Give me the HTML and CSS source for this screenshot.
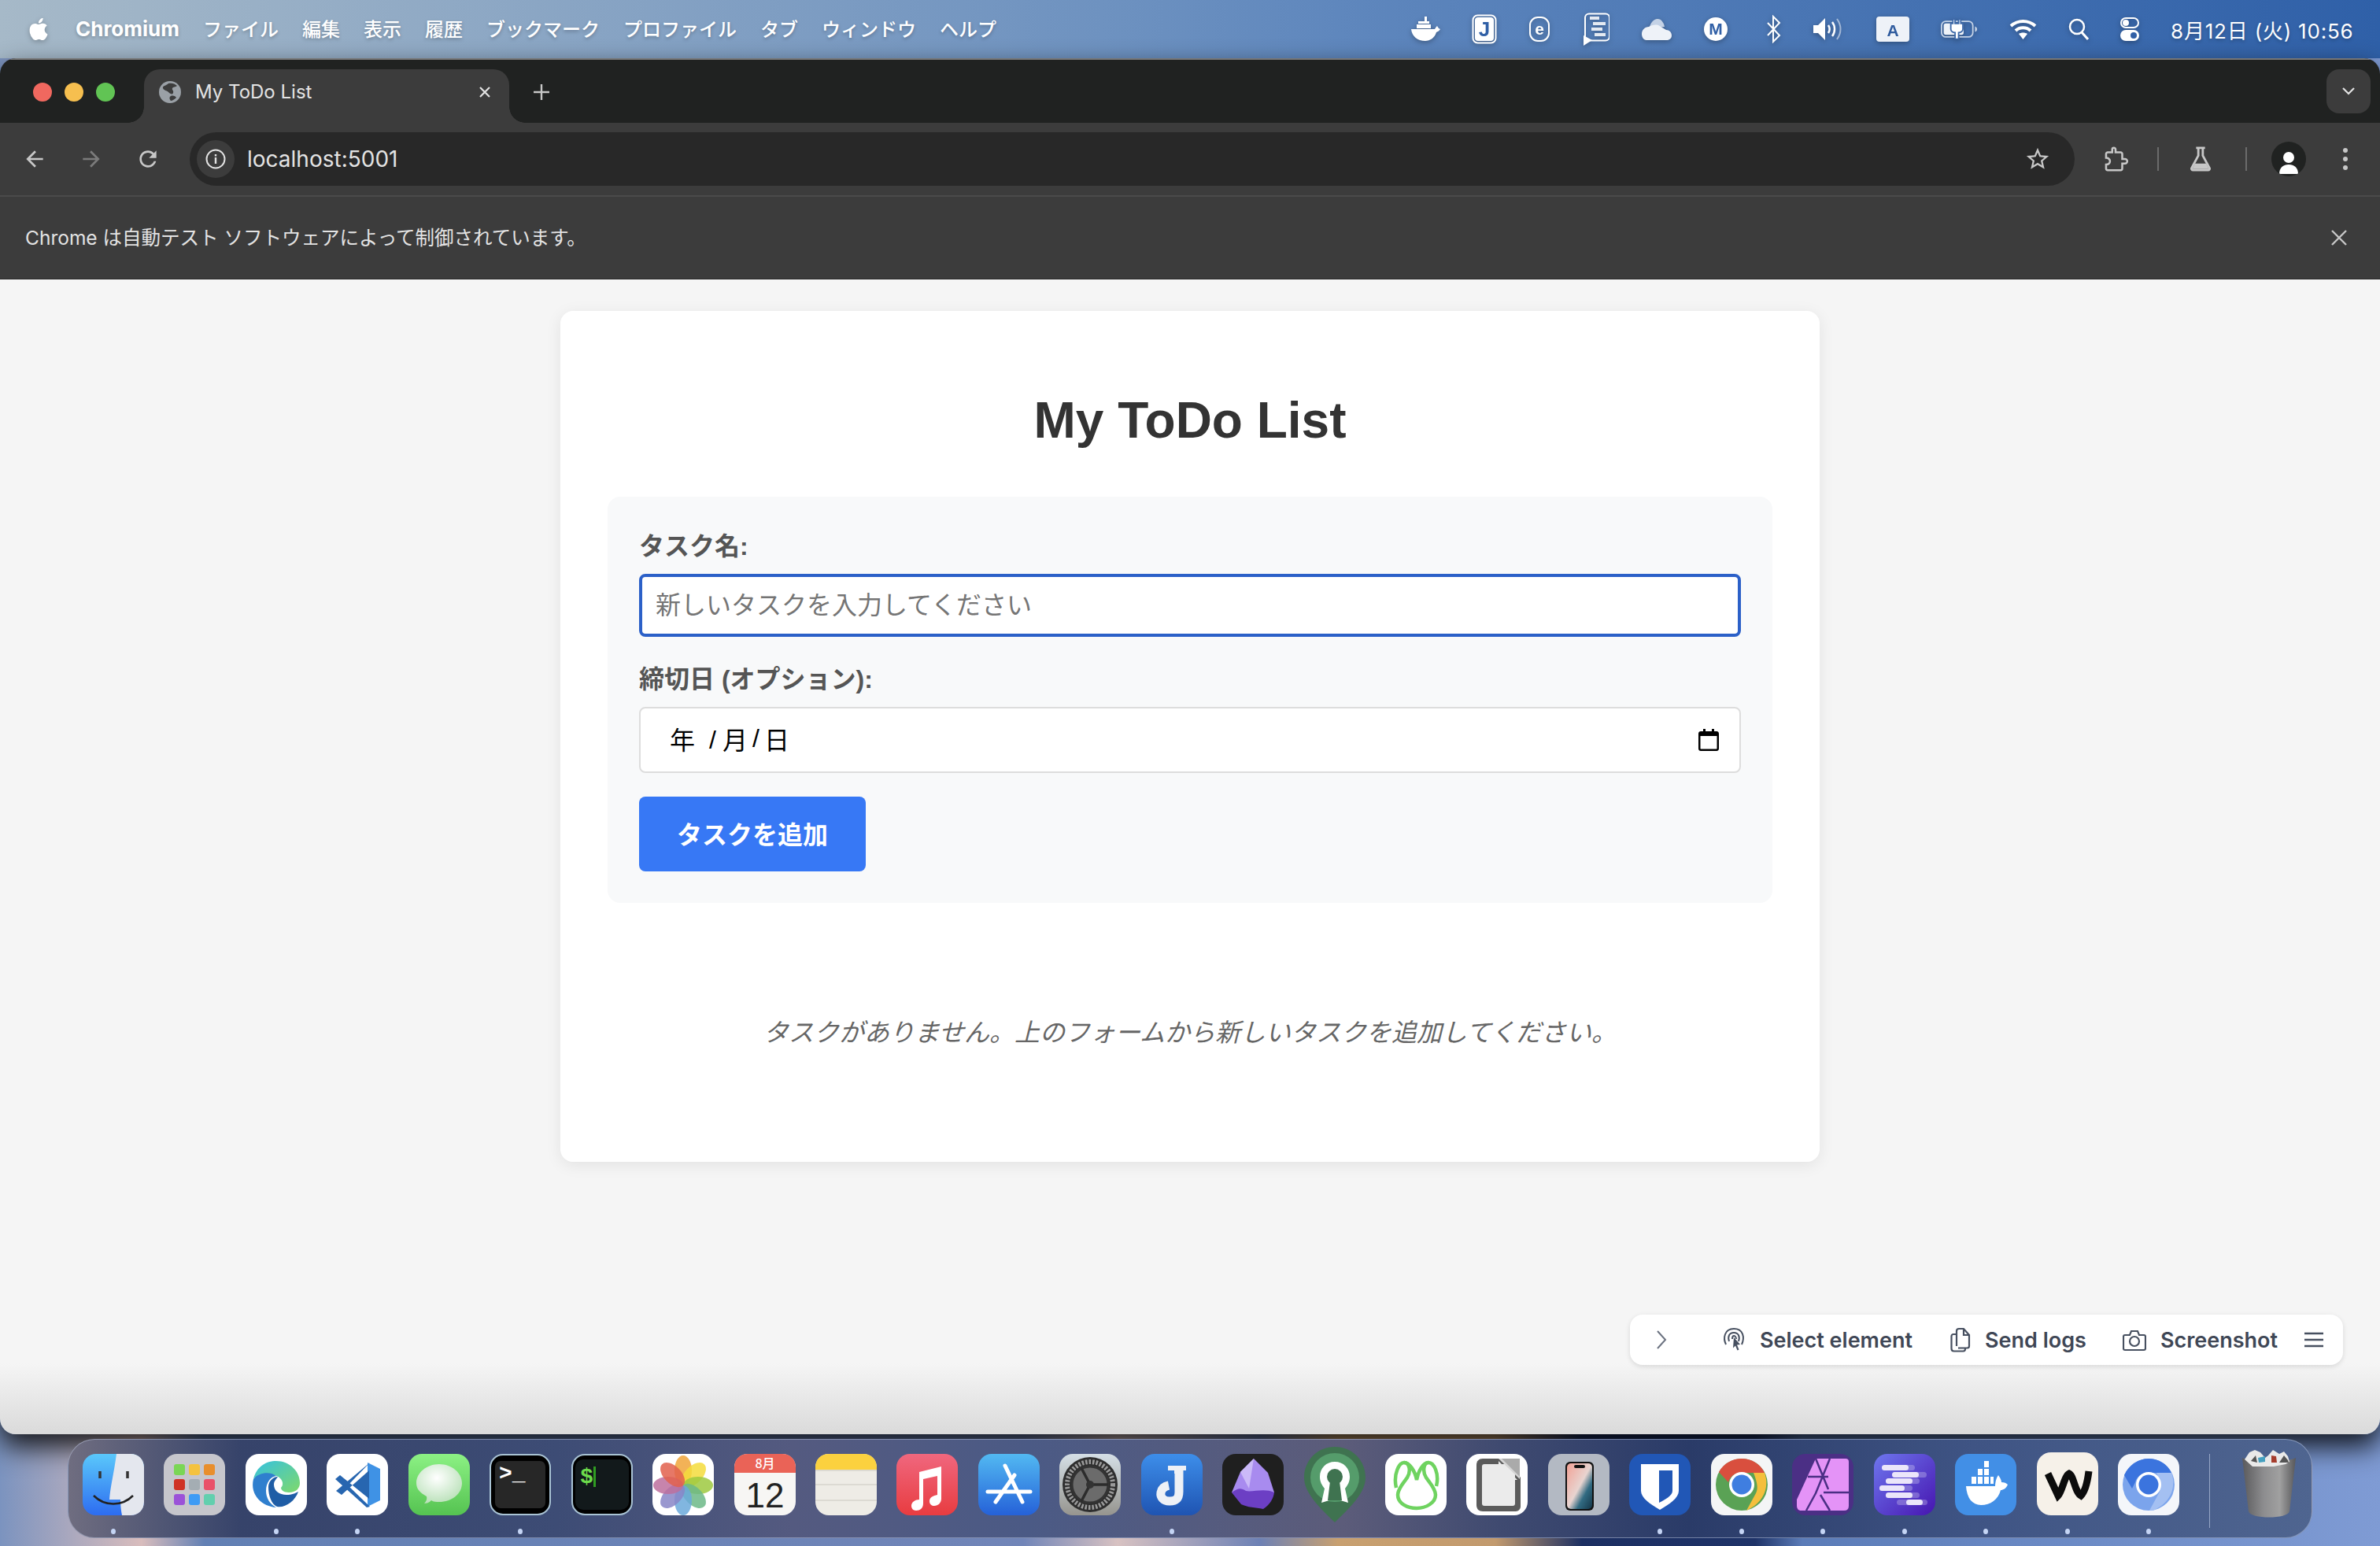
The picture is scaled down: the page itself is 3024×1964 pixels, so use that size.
FILE: index.html
```html
<!DOCTYPE html>
<html lang="ja">

<head>
    <meta charset="UTF-8">
    <title>My ToDo List</title>
    <link rel="stylesheet" href="styles.css">
</head>

<body>

    <!-- mac menu bar -->
    <header class="menubar">
        <svg class="apple" width="28" height="33" viewBox="0 0 16 16.5"><path fill="#fff" d="M11.182.008C11.148-.03 9.923.023 8.857 1.18c-1.066 1.156-.902 2.482-.878 2.516s1.52.087 2.475-1.258.762-2.391.728-2.43m3.314 11.733c-.048-.096-2.325-1.234-2.113-3.422s1.675-2.789 1.698-2.854-.597-.79-1.254-1.157a3.7 3.7 0 0 0-1.563-.434c-.108-.003-.483-.095-1.254.116-.508.139-1.653.589-1.968.607-.316.018-1.256-.522-2.267-.665-.647-.1-1.333.105-1.824.302-.49.197-1.422.759-2.074 2.242-.652 1.483-.311 3.832-.067 4.562.244.73.625 1.926 1.273 2.799.576.986 1.34 1.67 1.659 1.903s1.219.388 1.843.07c.502-.282 1.408-.444 1.766-.431.357.013 1.061.154 1.782.539.571.197 1.111.115 1.652-.105.541-.221 1.324-1.059 2.238-2.758q.52-1.185.473-1.282"/></svg>
        <nav class="menu-items">
            <span class="app-name">Chromium</span>
            <span>ファイル</span>
            <span>編集</span>
            <span>表示</span>
            <span>履歴</span>
            <span>ブックマーク</span>
            <span>プロファイル</span>
            <span>タブ</span>
            <span>ウィンドウ</span>
            <span>ヘルプ</span>
        </nav>
        <div class="status-items">
            <!-- docker -->
            <svg width="38" height="34" viewBox="0 0 38 34"><path fill="#fff" d="M18 1h3v6h-3zM10 7h14v3H10zM8 11h18v5H8zM1 17h30c1-2 2-3 3-4l2 3 2 1c-1 2-3 3-5 4-2 7-8 11-14 11C9 32 2 26 1 17z"/></svg>
            <!-- joplin -->
            <svg width="32" height="38" viewBox="0 0 32 38"><rect x="1.5" y="1.5" width="29" height="35" rx="6" fill="none" stroke="#fff" stroke-width="2"/><rect x="4" y="4" width="24" height="30" rx="4" fill="#fff"/><text class="status-letter" x="16" y="28" text-anchor="middle" fill="#3160a6">J</text></svg>
            <!-- e -->
            <svg width="30" height="34" viewBox="0 0 30 34"><rect x="2" y="2" width="24" height="30" rx="10" fill="none" stroke="#fff" stroke-width="2"/><text class="status-letter small" x="14" y="24" text-anchor="middle" fill="#fff">e</text></svg>
            <!-- script list -->
            <svg width="33" height="42" viewBox="0 0 33 42"><rect x="2" y="1.5" width="31" height="34" rx="5" fill="none" stroke="#fff" stroke-width="2"/><path stroke="#fff" stroke-width="4" d="M8 7h12M12 14h16M10 21h14M14 28h14" opacity=".85"/><path fill="#fff" d="M0 29l11 6-11 7z"/></svg>
            <!-- cloud -->
            <svg width="40" height="28" viewBox="0 0 40 28"><path fill="#c4d2e6" d="M10 14C12 6 16 1 21 1s8 5 9 10z"/><path fill="#eef2f8" d="M1 20c0-5 4-9 9-9 3-2 8-3 12-2l10 6c4 0 7 3 7 7s-3 6-7 6H7c-4 0-6-4-6-8z"/></svg>
            <!-- m -->
            <svg width="38" height="34" viewBox="0 0 38 34"><circle cx="15" cy="17" r="15" fill="#fff"/><text class="status-letter small" x="15" y="24" text-anchor="middle" fill="#3160a6">M</text></svg>
            <!-- bluetooth -->
            <svg width="21" height="36" viewBox="0 0 21 36"><path fill="none" stroke="#fff" stroke-width="2" d="M3 10l15 16-8 8V2l8 8L3 26"/></svg>
            <!-- volume -->
            <svg width="40" height="32" viewBox="0 0 40 32"><path fill="#fff" d="M0 11h6l9-9v28l-9-9H0z"/><path fill="none" stroke="#fff" stroke-width="2.5" d="M19 11c2 3 2 7 0 10M24 7c4 5 4 13 0 18"/><path fill="none" stroke="#fff" stroke-width="2" opacity=".5" d="M30 3c6 8 6 18 0 26"/></svg>
            <!-- input source -->
            <svg width="42" height="32" viewBox="0 0 42 32"><rect x="0" y="0" width="42" height="32" rx="4" fill="#eef2f8"/><text class="status-letter small" x="21" y="25" text-anchor="middle" fill="#2f5b9e">A</text></svg>
            <!-- battery -->
            <svg width="47" height="26" viewBox="0 0 52 28"><rect x="1" y="3" width="44" height="22" rx="6" fill="none" stroke="#c4d2e6" stroke-width="2"/><rect x="4" y="6" width="28" height="16" rx="3" fill="#eef2f8"/><path fill="#fff" stroke="#3d69a9" stroke-width="2" d="M17 0h3v6h5V0h3v6h3v8c0 3-3 5-6 5v9h-5v-9c-3 0-6-2-6-5V6h3z"/><path fill="#c4d2e6" d="M48 10c2 1 3 2 3 4s-1 3-3 4z"/></svg>
            <!-- wifi -->
            <svg width="35" height="28" viewBox="0 0 35 28"><path fill="none" stroke="#fff" stroke-width="4" d="M2 10c9-8 22-8 31 0M8 16c5-5 14-5 19 0"/><path fill="#fff" d="M12 20c3-2 8-2 11 0l-5.500 7z"/></svg>
            <!-- search -->
            <svg width="26" height="28" viewBox="0 0 26 28"><circle cx="11" cy="11" r="9" fill="none" stroke="#fff" stroke-width="2.5"/><path stroke="#fff" stroke-width="3" d="M17 18l8 9"/></svg>
            <!-- control center -->
            <svg width="24" height="30" viewBox="0 0 24 30"><rect x="1" y="1" width="22" height="12" rx="6" fill="none" stroke="#fff" stroke-width="2"/><circle cx="7" cy="7" r="4" fill="#fff"/><rect y="16" width="24" height="14" rx="7" fill="#fff"/><circle cx="17" cy="23" r="4" fill="#3160a6"/></svg>
            <span class="clock">8月12日 (火) 10:56</span>
        </div>
    </header>

    <!-- browser window -->
    <main class="window">
        <div class="tabstrip">
            <div class="traffic">
                <i class="light red"></i>
                <i class="light yellow"></i>
                <i class="light green"></i>
            </div>
            <div class="tab">
                <svg width="28" height="28" viewBox="0 0 28 28"><circle cx="14" cy="14" r="14" fill="#9aa0a6"/><path fill="#3c3c3c" d="M12 3c4-1 8 0 11 3-2 2-5 1-6 3s2 3 1 6-4 1-6-1-6-2-7-5 4-3 7-6zM15 19c3-1 6 0 7 2-2 2-5 4-7 4-2-2-2-5 0-6z"/></svg>
                <span class="tab-title">My ToDo List</span>
                <svg class="tab-close" width="18" height="18" viewBox="0 0 18 18"><path stroke="#e3e3e3" stroke-width="2.200" d="M3 3l12 12M15 3L3 15"/></svg>
            </div>
            <svg class="tab-new" width="24" height="24" viewBox="0 0 24 24"><path stroke="#c7c7c7" stroke-width="2.400" d="M12 2v20M2 12h20"/></svg>
            <div class="tab-search">
                <svg width="18" height="12" viewBox="0 0 18 12"><path fill="none" stroke="#e3e3e3" stroke-width="2.200" d="M2 2l7 7 7-7"/></svg>
            </div>
        </div>

        <div class="toolbar">
            <svg class="tool-icon" width="44" height="32" viewBox="0 0 24 24"><path fill="#c7c7c7" d="M20 11H7.830l5.590-5.590L12 4l-8 8 8 8 1.410-1.410L7.830 13H20v-2z"/></svg>
            <svg class="tool-icon" width="44" height="32" viewBox="0 0 24 24"><path fill="#7b7b7b" d="M4 11h12.170l-5.590-5.590L12 4l8 8-8 8-1.410-1.410L16.170 13H4v-2z"/></svg>
            <svg class="tool-icon" width="44" height="32" viewBox="0 0 24 24"><path fill="#c7c7c7" d="M17.650 6.350C16.200 4.900 14.210 4 12 4c-4.420 0-7.990 3.580-7.990 8s3.570 8 7.990 8c3.730 0 6.840-2.550 7.730-6h-2.080c-.82 2.330-3.040 4-5.650 4-3.310 0-6-2.690-6-6s2.690-6 6-6c1.660 0 3.140.69 4.220 1.780L13 11h7V4l-2.350 2.350z"/></svg>
            <div class="omnibox">
                <div class="site-chip">
                    <svg width="26" height="26" viewBox="0 0 26 26"><circle cx="13" cy="13" r="11.500" fill="none" stroke="#e3e3e3" stroke-width="2"/><path stroke="#e3e3e3" stroke-width="2.400" d="M13 11v8M13 7v2.400"/></svg>
                </div>
                <span class="url">localhost:5001</span>
                <svg class="star" width="34" height="34" viewBox="0 0 24 24"><path fill="#c7c7c7" d="M22 9.240l-7.190-.62L12 2 9.190 8.630 2 9.240l5.460 4.730L5.820 21 12 17.270 18.180 21l-1.630-7.030L22 9.240zM12 15.400l-3.760 2.270 1-4.280-3.320-2.880 4.380-.38L12 6.100l1.710 4.040 4.380.38-3.320 2.880 1 4.280L12 15.400z"/></svg>
            </div>
            <svg class="tool-icon" width="44" height="34" viewBox="0 0 24 24"><path fill="none" stroke="#c7c7c7" stroke-width="1.800" d="M20.500 12H18V7.500c0-.8-.7-1.500-1.500-1.500H12V3.500C12 2.700 11.300 2 10.500 2S9 2.700 9 3.500V6H5c-.8 0-1.500.7-1.500 1.500V11c2 0 3.500 1.200 3.500 3s-1.500 3-3.500 3v3.500c0 .8.700 1.500 1.500 1.500h11.500c.8 0 1.500-.7 1.500-1.500V16h2.500c1.100 0 2-.9 2-2s-.9-2-2-2z"/></svg>
            <i class="tool-sep"></i>
            <svg class="tool-icon flask" width="44" height="34" viewBox="0 0 24 24"><path fill="none" stroke="#c7c7c7" stroke-width="2" d="M8 2h8M10 2v7L4 20c-.5 1 .2 2 1.200 2h13.600c1 0 1.700-1 1.200-2L14 9V2"/><path fill="#c7c7c7" d="M7 16h10l2.500 5h-15z"/></svg>
            <i class="tool-sep"></i>
            <div class="avatar">
                <svg width="26" height="32" viewBox="0 0 26 32"><circle cx="13" cy="8" r="7" fill="#fff"/><path fill="#fff" d="M1 29c0-8 5-12 12-12s12 4 12 12z"/></svg>
            </div>
            <svg class="tool-dots" width="38" height="32" viewBox="0 0 38 32"><circle cx="19" cy="5" r="3" fill="#c7c7c7"/><circle cx="19" cy="16" r="3" fill="#c7c7c7"/><circle cx="19" cy="27" r="3" fill="#c7c7c7"/></svg>
        </div>

        <div class="infobar">
            <span>Chrome は自動テスト ソフトウェアによって制御されています。</span>
            <svg width="22" height="22" viewBox="0 0 22 22"><path stroke="#c7c7c7" stroke-width="2.400" d="M2 2l18 18M20 2L2 20"/></svg>
        </div>

        <div class="page">
            <section class="card">
                <h1>My ToDo List</h1>

                <form class="task-form">
                    <label for="taskName">タスク名:</label>
                    <input type="text" id="taskName" class="name-input" placeholder="新しいタスクを入力してください">

                    <label>締切日 (オプション):</label>
                    <div class="date-input">
                        <span>年</span><span class="date-sep first">/</span><span>月</span><span class="date-sep">/</span><span>日</span>
                        <svg class="date-icon" width="26" height="28" viewBox="0 0 26 28"><path fill="#000" d="M6 0h3v3h8V0h3v3h3c1.700 0 3 1.300 3 3v19c0 1.700-1.300 3-3 3H3c-1.700 0-3-1.300-3-3V6c0-1.700 1.300-3 3-3h3zM2.500 9v16c0 .3.200.5.500.5h20c.3 0 .5-.2.500-.5V9z"/></svg>
                    </div>

                    <button type="button" class="add-btn">タスクを追加</button>
                </form>

                <p class="empty">タスクがありません。上のフォームから新しいタスクを追加してください。</p>
            </section>

            <!-- feedback widget -->
            <div class="widget">
                <svg class="widget-arrow" width="16" height="26" viewBox="0 0 16 26"><path fill="none" stroke="#6b7280" stroke-width="2" d="M3 2l10 11L3 24"/></svg>
                <div class="widget-item pick">
                    <svg width="30" height="32" viewBox="0 0 30 32"><path fill="none" stroke="#475060" stroke-width="2" d="M5 22C1 14 3 2 15 2s14 11 10 20M9 18c-2-6 0-11 6-11s8 5 6 11M13 15c0-3 1-4 2-4s3 1 3 4"/><path fill="#475060" d="M15 13l8 9-4 .5 2.500 6-2 1-2.500-6-3 3z"/></svg>
                    <span>Select element</span>
                </div>
                <div class="widget-item logs">
                    <svg width="26" height="32" viewBox="0 0 26 32"><path fill="none" stroke="#475060" stroke-width="2.200" d="M8 24V5c0-2 1-3 3-3h6l7 8v14c0 1.500-1 2.500-2.500 2.500H10M17 2v8h7M8 9H4c-1.500 0-2.500 1-2.500 2.500V27c0 2 1 3.500 3 3.500h12c1.500 0 2.500-1 2.500-3"/></svg>
                    <span>Send logs</span>
                </div>
                <div class="widget-item shot">
                    <svg width="30" height="30" viewBox="0 0 30 30"><path fill="none" stroke="#475060" stroke-width="2.200" d="M3 9h6l2-5h8l2 5h6c1 0 2 1 2 2v15c0 1-1 2-2 2H3c-1 0-2-1-2-2V11c0-1 1-2 2-2z"/><circle cx="15" cy="17" r="6" fill="none" stroke="#475060" stroke-width="2.200"/></svg>
                    <span>Screenshot</span>
                </div>
                <svg class="widget-menu" width="26" height="20" viewBox="0 0 26 20"><path stroke="#475060" stroke-width="2.400" d="M1 2h24M1 10h24M1 18h24"/></svg>
            </div>
        </div>
    </main>

    <!-- mac dock -->
    <footer class="dock">
        <div class="dock-item"><svg width="78" height="78" viewBox="0 0 78 78"><defs><linearGradient id="finderA" x1="0" y1="0" x2="0" y2="1"><stop offset="0" stop-color="#5ac8fb"/><stop offset="1" stop-color="#2d6cf0"/></linearGradient></defs><rect width="78" height="78" rx="17" fill="url(#finderA)"/><path fill="#e4e7ee" d="M43 0h18c10 0 17 7 17 17v44c0 10-7 17-17 17H50c-1-5-2-12-2-20H34c1-15 6-35 9-58z"/><path stroke="#333" stroke-width="3.500" d="M22 22v9M57 22v9"/><path fill="none" stroke="#222" stroke-width="2.500" d="M14 53c14 14 36 14 50 0"/></svg><i class="dot"></i></div>
        <div class="dock-item"><svg width="78" height="78" viewBox="0 0 78 78"><rect width="78" height="78" rx="17" fill="#c6c6cc"/><rect x="13" y="13" width="14" height="14" rx="3" fill="#7ad655"/><rect x="32" y="13" width="14" height="14" rx="3" fill="#f4c23f"/><rect x="51" y="13" width="14" height="14" rx="3" fill="#e88e2d"/><rect x="13" y="32" width="14" height="14" rx="3" fill="#cf3224"/><rect x="32" y="32" width="14" height="14" rx="3" fill="#a4adb3"/><rect x="51" y="32" width="14" height="14" rx="3" fill="#e9516a"/><rect x="13" y="51" width="14" height="14" rx="3" fill="#9b52d8"/><rect x="32" y="51" width="14" height="14" rx="3" fill="#3f9bf5"/><rect x="51" y="51" width="14" height="14" rx="3" fill="#62cfae"/></svg></div>
        <div class="dock-item"><svg width="78" height="78" viewBox="0 0 78 78"><defs><linearGradient id="edgeA" x1="0" y1="0" x2="1" y2="1"><stop offset="0" stop-color="#35c1e1"/><stop offset="1" stop-color="#7fd96b"/></linearGradient></defs><rect width="78" height="78" rx="17" fill="#fff"/><path fill="url(#edgeA)" d="M10 32C14 16 26 9 39 9c17 0 30 13 30 28 0 7-5 12-14 12-6 0-10-3-10-6 3-3 3-8-1-12-6-6-24-8-34 1z"/><path fill="#2f7fce" d="M10 32c7-9 22-10 29-4-7 1-13 8-13 19 0 9 5 17 13 21C22 67 5 53 10 32z"/><path fill="#1f5da6" d="M29 42c0-7 6-13 12-13-1 2-5 5-5 10 0 8 7 13 16 13 7 0 11-2 15-4-4 12-17 21-27 19-7-3-11-14-11-25z"/></svg><i class="dot"></i></div>
        <div class="dock-item"><svg width="78" height="78" viewBox="0 0 78 78"><rect width="78" height="78" rx="17" fill="#fff"/><path fill="#3f92e5" d="M52 11l16 8v40l-16 8z"/><path fill="#2766b0" d="M55 11L27 40 55 67l-4 1L11 32l6-5 37 30V21L19 52l-7-5z"/></svg><i class="dot"></i></div>
        <div class="dock-item"><svg width="78" height="78" viewBox="0 0 78 78"><defs><linearGradient id="msgA" x1="0" y1="0" x2="0" y2="1"><stop offset="0" stop-color="#8cf184"/><stop offset="1" stop-color="#55c351"/></linearGradient><radialGradient id="msgB" cx=".45" cy=".35" r=".7"><stop offset="0" stop-color="#fff"/><stop offset="1" stop-color="#b6dfb5"/></radialGradient></defs><rect width="78" height="78" rx="17" fill="url(#msgA)"/><path fill="url(#msgB)" d="M39 13c16 0 29 11 29 24 0 14-13 24-29 24-4 0-7 0-10-2-3 3-6 4-9 4 2-2 4-5 3-9C14 49 10 44 10 37c0-13 13-24 29-24z"/></svg></div>
        <div class="dock-item"><svg width="78" height="78" viewBox="0 0 78 78"><rect x="1" y="1" width="76" height="76" rx="16" fill="#000" stroke="#a9c3d4" stroke-width="2"/><rect x="7" y="9" width="64" height="60" rx="7" fill="#272727"/><text class="term-text" x="12" y="33" fill="#fff">&gt;_</text></svg><i class="dot"></i></div>
        <div class="dock-item"><svg width="78" height="78" viewBox="0 0 78 78"><rect x="1" y="1" width="76" height="76" rx="16" fill="#000" stroke="#a9c3d4" stroke-width="2"/><rect x="5" y="7" width="68" height="64" rx="10" fill="#12191b"/><text class="term-text" x="11" y="37" fill="#6ddc4b">$</text><rect x="28" y="16" width="3" height="26" fill="#2f9c22"/></svg></div>
        <div class="dock-item"><svg width="78" height="78" viewBox="0 0 78 78"><rect width="78" height="78" rx="17" fill="#fff"/><g transform="translate(39 40)"><ellipse cy="-19" rx="11" ry="19" fill="#f0a43a" opacity=".85"/><ellipse cy="-19" rx="11" ry="19" fill="#f5dc3c" opacity=".85" transform="rotate(45)"/><ellipse cy="-19" rx="11" ry="19" fill="#9dc93f" opacity=".85" transform="rotate(90)"/><ellipse cy="-19" rx="11" ry="19" fill="#6cb887" opacity=".85" transform="rotate(135)"/><ellipse cy="-19" rx="11" ry="19" fill="#6ba9da" opacity=".85" transform="rotate(180)"/><ellipse cy="-19" rx="11" ry="19" fill="#8886c7" opacity=".85" transform="rotate(225)"/><ellipse cy="-19" rx="11" ry="19" fill="#bd6f9e" opacity=".85" transform="rotate(270)"/><ellipse cy="-19" rx="11" ry="19" fill="#e2604c" opacity=".85" transform="rotate(315)"/></g></svg></div>
        <div class="dock-item"><svg width="78" height="78" viewBox="0 0 78 78"><rect width="78" height="78" rx="17" fill="#f7f6f4"/><path fill="#ea6357" d="M0 24V17C0 7 7 0 17 0h44c10 0 17 7 17 17v7z"/><text class="cal-month" x="39" y="18" text-anchor="middle" fill="#fff">8月</text><text class="cal-day" x="39" y="68" text-anchor="middle" fill="#222">12</text></svg></div>
        <div class="dock-item"><svg width="78" height="78" viewBox="0 0 78 78"><rect width="78" height="78" rx="17" fill="#eeece6"/><path fill="#fbd13f" d="M0 20V17C0 7 7 0 17 0h44c10 0 17 7 17 17v3z"/><path stroke="#dcdad3" stroke-width="2" d="M0 21h78M0 39h78M0 59h78"/></svg></div>
        <div class="dock-item"><svg width="78" height="78" viewBox="0 0 78 78"><defs><linearGradient id="musicA" x1="0" y1="0" x2="0" y2="1"><stop offset="0" stop-color="#f0677e"/><stop offset="1" stop-color="#e83c40"/></linearGradient></defs><rect width="78" height="78" rx="17" fill="url(#musicA)"/><path fill="#fff" d="M29 23l28-7v41c0 5-4 9-9 9-3 0-6-2-6-6 0-5 5-7 10-8V28l-18 4v31c0 6-4 9-9 9-4 0-6-3-6-6 0-5 5-8 10-8z"/></svg></div>
        <div class="dock-item"><svg width="78" height="78" viewBox="0 0 78 78"><defs><linearGradient id="storeA" x1="0" y1="0" x2="0" y2="1"><stop offset="0" stop-color="#52b9f2"/><stop offset="1" stop-color="#2561d8"/></linearGradient></defs><rect width="78" height="78" rx="17" fill="url(#storeA)"/><path fill="none" stroke="#fff" stroke-width="5" stroke-linecap="round" d="M34 15l22 46M46 27L22 61M12 48h54"/></svg></div>
        <div class="dock-item"><svg width="78" height="78" viewBox="0 0 78 78"><defs><linearGradient id="setA" x1="0" y1="0" x2="0" y2="1"><stop offset="0" stop-color="#d5dfe6"/><stop offset="1" stop-color="#96958f"/></linearGradient></defs><rect width="78" height="78" rx="17" fill="url(#setA)"/><circle cx="39" cy="39" r="35" fill="#2e2e2e"/><circle cx="39" cy="39" r="29" fill="none" stroke="#9a9a9a" stroke-width="6" stroke-dasharray="2.500 2"/><circle cx="39" cy="39" r="23" fill="#6b6b6b" stroke="#333" stroke-width="3"/><path stroke="#2c2c2c" stroke-width="3.500" d="M39 39L28 18M39 39h23M39 39L28 60"/><circle cx="39" cy="39" r="5" fill="#333"/></svg></div>
        <div class="dock-item"><svg width="78" height="78" viewBox="0 0 78 78"><defs><linearGradient id="jopA" x1="0" y1="0" x2="0" y2="1"><stop offset="0" stop-color="#3d8eea"/><stop offset="1" stop-color="#1f54b2"/></linearGradient></defs><rect width="78" height="78" rx="17" fill="url(#jopA)"/><path fill="#eef1f6" d="M34 15h23v6h-4v4H42v-4h-8z"/><path fill="none" stroke="#eef1f6" stroke-width="11" d="M48 21V48C48 58 43 60 36 60 28 60 24 55 25 49 26 44 30 41 35 40"/></svg><i class="dot"></i></div>
        <div class="dock-item"><svg width="78" height="78" viewBox="0 0 78 78"><rect width="78" height="78" rx="17" fill="#1f1f1f"/><path fill="#a88bef" d="M40 6l18 18 8 25H12l11-26z"/><path fill="#6c3fc4" d="M12 49c8-6 12-6 18-2 8 2 24-4 36 2-1 8-6 16-14 21-10-2-20-2-28-6z"/><path fill="#cbbaf8" d="M40 6l-6 38-11-21z"/></svg></div>
        <div class="dock-item"><svg class="pin" width="78" height="96" viewBox="0 0 78 96"><path fill="#3f7350" d="M39 0c22 0 39 17 39 39 0 20-20 38-39 57C20 77 0 59 0 39 0 17 17 0 39 0z"/><circle cx="39" cy="39" r="31" fill="#559c6b"/><path fill="#fff" d="M39 19c-11 0-19 8-19 19 0 7 3 11 6 15l-4 18 10-3 2-19 10 0 2 19 10 3-4-18c3-4 6-8 6-15 0-11-8-19-19-19z"/><circle cx="39" cy="38" r="10" fill="#3f7350"/><path fill="#3f7350" d="M33 44h12l3 24H30z"/></svg></div>
        <div class="dock-item"><svg width="78" height="78" viewBox="0 0 78 78"><rect width="78" height="78" rx="17" fill="#fff"/><path fill="none" stroke="#6fd360" stroke-width="4.500" d="M14 43C10 25 18 11 24 11 31 11 33 22 28 30 24 36 16 44 16 52 16 63 28 69 40 69 52 69 64 62 64 52 64 44 56 36 52 30 47 22 49 11 55 11 62 11 69 25 65 41"/><path fill="none" stroke="#6fd360" stroke-width="4.500" d="M24 11C31 11 38 22 40 33 42 22 48 11 55 11"/></svg></div>
        <div class="dock-item"><svg width="78" height="78" viewBox="0 0 78 78"><rect width="78" height="78" rx="17" fill="#fff"/><path fill="#5b5b5b" d="M21 6h24l24 24v37c0 3-3 6-6 6H21c-5 0-8-3-8-8V14c0-5 3-8 8-8z"/><rect x="20" y="13" width="42" height="53" rx="3" fill="#ebebeb"/><path fill="#d6d6d6" d="M41 6h27v26z"/><path fill="#aaa" d="M45 6h23v23z"/><path fill="#ebebeb" d="M41 9l24 24H41z"/></svg></div>
        <div class="dock-item"><svg width="78" height="78" viewBox="0 0 78 78"><defs><linearGradient id="simA" x1="0" y1="0" x2="1" y2="1"><stop offset="0" stop-color="#f2a195"/><stop offset=".5" stop-color="#e8d4d0"/><stop offset=".7" stop-color="#326b82"/><stop offset="1" stop-color="#153648"/></linearGradient></defs><rect width="78" height="78" rx="17" fill="#b3b9c3"/><rect x="22" y="10" width="36" height="62" rx="6" fill="#111"/><rect x="24" y="12" width="32" height="58" rx="5" fill="url(#simA)"/><rect x="33" y="14" width="14" height="4" rx="2" fill="#111"/></svg></div>
        <div class="dock-item"><svg width="78" height="78" viewBox="0 0 78 78"><rect width="78" height="78" rx="17" fill="#2157b6"/><path fill="#fff" d="M15 13h48v34c0 9-12 17-24 24-12-7-24-15-24-24z"/><path fill="#2157b6" d="M38 21h17v26c0 6-9 11-17 15z"/></svg><i class="dot"></i></div>
        <div class="dock-item"><svg width="78" height="78" viewBox="0 0 78 78"><rect width="78" height="78" rx="17" fill="#f4f5f6"/><circle cx="39" cy="39" r="33" fill="#5aa255"/><path fill="#d94f3e" d="M10 23C16 12 27 6 39 6c13 0 24 7 29 18H39c-8 0-15 4-17 12z"/><path fill="#f4bf3d" d="M68 24c6 16 1 36-21 47l-2 1 12-22c3-6 2-13-3-26z"/><path d="M39 72l12-22-6 5z" fill="#5aa255"/><circle cx="39" cy="39" r="16" fill="#fff"/><circle cx="39" cy="39" r="12.500" fill="#3f7ee0"/></svg><i class="dot"></i></div>
        <div class="dock-item"><svg width="78" height="78" viewBox="0 0 78 78"><rect width="78" height="78" rx="17" fill="#4b2f85"/><path fill="#e493f7" d="M30 6H68Q72 6 72 10V66Q72 72 66 72H12Q6 72 6 66V58z"/><path fill="none" stroke="#4b2f85" stroke-width="2.500" d="M48 6L30 50M30 6L46 45M20 29H46M40 49H72M30 50L18 72M36 52L48 72"/></svg><i class="dot"></i></div>
        <div class="dock-item"><svg width="78" height="78" viewBox="0 0 78 78"><defs><linearGradient id="barsA" x1="0" y1="0" x2="1" y2="1"><stop offset="0" stop-color="#6e76ee"/><stop offset="1" stop-color="#4615b0"/></linearGradient></defs><rect width="78" height="78" rx="17" fill="url(#barsA)"/><g fill="#fff" opacity=".25"><rect x="10" y="14" width="42" height="7" rx="3.500"/><rect x="23" y="23" width="44" height="7" rx="3.500"/><rect x="15" y="31" width="43" height="7" rx="3.500"/><rect x="7" y="40" width="42" height="7" rx="3.500"/><rect x="15" y="49" width="43" height="7" rx="3.500"/><rect x="29" y="58" width="39" height="7" rx="3.500"/></g><g fill="#ebe6fa"><rect x="10" y="14" width="34" height="7" rx="3.500"/><rect x="23" y="23" width="34" height="7" rx="3.500"/><rect x="15" y="31" width="34" height="7" rx="3.500"/><rect x="7" y="40" width="32" height="7" rx="3.500"/><rect x="15" y="49" width="34" height="7" rx="3.500"/><rect x="41" y="58" width="21" height="7" rx="3.500"/></g></svg><i class="dot"></i></div>
        <div class="dock-item"><svg width="78" height="78" viewBox="0 0 78 78"><rect width="78" height="78" rx="17" fill="#428fe6"/><path fill="#fff" d="M14 41h37c0-4 1-10 4-14 2 3 4 6 4 9 4 0 6 1 8 3-2 5-6 7-9 7-3 12-13 19-25 19-11 0-18-9-19-24z"/><g fill="#fff"><rect x="21" y="29" width="6" height="9"/><rect x="29" y="29" width="6" height="9"/><rect x="37" y="29" width="6" height="9"/><rect x="45" y="29" width="4" height="9"/><rect x="29" y="19" width="6" height="8"/><rect x="37" y="19" width="6" height="8"/><rect x="37" y="9" width="6" height="8"/></g></svg><i class="dot"></i></div>
        <div class="dock-item tall"><svg width="78" height="80" viewBox="0 0 78 80"><rect width="78" height="80" rx="18" fill="#f6f1e9"/><path fill="none" stroke="#0c0c0c" stroke-width="9" d="M14 27L27 55C32 50 35 30 41 27 47 30 48 50 56 55 61 50 64 40 66 24"/></svg><i class="dot"></i></div>
        <div class="dock-item"><svg width="78" height="78" viewBox="0 0 78 78"><rect width="78" height="78" rx="17" fill="#f4f6fa"/><circle cx="39" cy="39" r="33" fill="#7ba4ec"/><path fill="#3b74de" d="M8 27C14 14 26 6 39 6c13 0 24 7 29 18H39c-8 0-15 4-17 12l-4 8z"/><path fill="#a4c0f2" d="M68 24c6 16 1 36-21 47l-7 1 12-22c3-6 2-13-3-26z"/><circle cx="39" cy="39" r="16" fill="#fff"/><circle cx="39" cy="39" r="12.500" fill="#3b74de"/></svg><i class="dot"></i></div>
        <i class="dock-sep"></i>
        <div class="dock-item trash"><svg width="70" height="88" viewBox="0 0 70 88"><defs><linearGradient id="trashA" x1="0" y1="0" x2="1" y2="0"><stop offset="0" stop-color="#5a5a5c"/><stop offset=".4" stop-color="#8d8d8f"/><stop offset=".7" stop-color="#a0a0a0"/><stop offset="1" stop-color="#58585a"/></linearGradient></defs><path fill="url(#trashA)" d="M1 12c10 6 58 6 68 0l-8 68c-2 10-50 10-52 0z"/><path fill="#e9e9e9" d="M4 14l6-9 7-3 7 3 6 7 4-3 6-7 8 5 6-3 5 6 2 7-5 3-15 3H14z"/><path fill="#45a0c0" d="M21 12l9-2v7l-8 1z"/><path fill="#a53c2c" d="M38 9l6 1 1 8-7 0z"/><path fill="#555" d="M12 16l6-7 2 9zM48 18l6-9 5 6 1 3z"/></svg></div>
    </footer>

</body>

</html>
```

FILE: styles.css
```css
html,
body {
    margin: 0;
    height: 100%;
}

body {
    height: 1964px;
    overflow: hidden;
    display: flex;
    flex-direction: column;
    background: linear-gradient(90deg, #7b93bf 0, #d9bdbd 180px, #6280b4 260px, #7185b8 1300px, #d8c2c2 1420px, #6d81b5 1600px, #c8a070 1700px, #c29a6e 1900px, #1c2f62 2010px, #1f3368 2230px, #5b7cb8 2290px, #7f9bd4 3024px);
    font-family: "Liberation Sans", "Noto Sans CJK JP", sans-serif;
}

svg {
    display: block;
    flex: none;
}

/* menu bar */
.menubar {
    height: 74px;
    flex: none;
    display: flex;
    align-items: center;
    padding-right: 32px;
    background: linear-gradient(90deg, #a6b9c8 0, #6e92c0 1400px, #5f87bd 1700px, #2f60a8 3024px);
    color: #fff;
    font-family: Inter, "Noto Sans CJK JP", sans-serif;
    font-size: 24px;
    text-shadow: 0 2px 4px rgba(0, 0, 0, .25);
}

.apple {
    margin-left: 35px;
    filter: drop-shadow(0 2px 3px rgba(0, 0, 0, .25));
}

.menu-items {
    display: flex;
    align-items: baseline;
    gap: 30px;
    margin-left: 33px;
    padding-bottom: 3px;
    font-weight: 500;
}

.app-name {
    font-size: 26px;
    font-weight: 700;
}

.status-items {
    display: flex;
    align-items: center;
    gap: 40px;
    margin-left: auto;
}

.status-items svg {
    filter: drop-shadow(0 2px 3px rgba(0, 0, 0, .3));
}

.status-letter {
    font-family: "Liberation Sans", sans-serif;
    font-size: 26px;
    font-weight: 700;
    text-shadow: none;
}

.status-letter.small {
    font-size: 21px;
}

.clock {
    width: 234px;
    font-size: 26px;
    letter-spacing: .8px;
    white-space: nowrap;
}

/* browser window */
.window {
    height: 1748px;
    flex: none;
    display: flex;
    flex-direction: column;
    border-radius: 20px;
    overflow: hidden;
    box-shadow: 0 16px 34px rgba(0, 0, 0, .85);
}

.tabstrip {
    height: 82px;
    flex: none;
    box-sizing: border-box;
    display: flex;
    align-items: flex-start;
    background: #202221;
    border-top: 2px solid #777;
    padding-top: 12px;
}

.traffic {
    width: 183px;
    height: 56px;
    flex: none;
    box-sizing: border-box;
    display: flex;
    align-items: center;
    gap: 16px;
    padding: 2px 0 0 42px;
}

.light {
    width: 24px;
    height: 24px;
    border-radius: 50%;
}

.red { background: #f0685f; }
.yellow { background: #f6bf4f; }
.green { background: #61c454; }

.tab {
    position: relative;
    width: 464px;
    height: 68px;
    flex: none;
    box-sizing: border-box;
    display: flex;
    align-items: flex-start;
    padding: 15px 22px 0 19px;
    gap: 18px;
    background: #3c3c3c;
    border-radius: 20px 20px 0 0;
}

/* flared bottom corners of the active tab */
.tab::before,
.tab::after {
    content: "";
    position: absolute;
    bottom: 0;
    width: 20px;
    height: 20px;
    background: radial-gradient(circle at 0 0, #202221 19.500px, #3c3c3c 20px);
}

.tab::before {
    left: -20px;
}

.tab::after {
    right: -20px;
    background: radial-gradient(circle at 100% 0, #202221 19.500px, #3c3c3c 20px);
}

.tab-title {
    font-family: Inter, sans-serif;
    font-size: 24px;
    line-height: 28px;
    color: #e3e3e3;
}

.tab-close {
    margin: 5px 0 0 auto;
}

.tab-new {
    margin: 17px 0 0 29px;
}

.tab-search {
    width: 56px;
    height: 56px;
    margin-left: auto;
    margin-right: 12px;
    display: flex;
    align-items: center;
    justify-content: center;
    border-radius: 16px;
    background: #3c3c3c;
}

.toolbar {
    height: 94px;
    flex: none;
    box-sizing: border-box;
    display: flex;
    align-items: center;
    gap: 31px;
    padding: 0 25px 0 22px;
    background: #3c3c3c;
    border-bottom: 2px solid #4a4a4a;
}

.toolbar > .tool-icon:nth-child(-n+3) {
    margin-right: -3px;
}

.omnibox {
    flex: 1;
    height: 68px;
    margin-left: 3px;
    margin-right: -1px;
    box-sizing: border-box;
    display: flex;
    align-items: center;
    padding: 0 30px 0 9px;
    border-radius: 34px;
    background: #282828;
}

.site-chip {
    width: 48px;
    height: 48px;
    display: flex;
    align-items: center;
    justify-content: center;
    border-radius: 50%;
    background: #3c3c3c;
}

.url {
    margin-left: 16px;
    font-family: Inter, sans-serif;
    font-size: 28px;
    color: #e3e3e3;
}

.star {
    margin-left: auto;
}

.tool-sep {
    width: 2px;
    height: 30px;
    flex: none;
    background: #6b6b6b;
}

.flask {
    margin-right: 4px;
}

.avatar {
    width: 44px;
    height: 44px;
    flex: none;
    display: flex;
    align-items: flex-end;
    justify-content: center;
    border-radius: 50%;
    background: #202221;
    overflow: hidden;
    padding-top: 2px;
    box-sizing: border-box;
}

.infobar {
    height: 105px;
    flex: none;
    box-sizing: border-box;
    display: flex;
    align-items: center;
    justify-content: space-between;
    padding: 0 41px 0 32px;
    background: #3c3c3c;
    border-bottom: 1px solid #2a2a2a;
    font-family: Inter, "Noto Sans CJK JP", sans-serif;
    font-size: 24.5px;
    color: #e3e3e3;
}

.infobar span {
    margin-bottom: 3px;
}

/* page content */
.page {
    flex: 1;
    display: flex;
    flex-direction: column;
    background: linear-gradient(#f5f5f5 calc(100% - 90px), #dadada);
}

.card {
    width: 1600px;
    margin: 40px auto 0;
    box-sizing: border-box;
    padding: 80px 60px;
    background: #fff;
    border-radius: 16px;
    box-shadow: 0 4px 20px rgba(0, 0, 0, .08);
}

h1 {
    margin: 0 0 38px;
    line-height: 118px;
    font-size: 64px;
    font-weight: 700;
    text-align: center;
    color: #333;
}

.task-form {
    display: flex;
    flex-direction: column;
    align-items: flex-start;
    height: 516px;
    box-sizing: border-box;
    padding: 40px;
    background: #f8f9fa;
    border-radius: 16px;
}

.task-form label {
    line-height: 46px;
    margin-bottom: 12px;
    font-size: 32px;
    font-weight: 700;
    color: #555;
}

.name-input {
    width: 100%;
    height: 81px;
    box-sizing: border-box;
    margin: 0 0 31px;
    padding: 0 17px;
    border: 4px solid #2b60c8;
    border-radius: 8px;
    outline: none;
    background: #fff;
    font-family: "Liberation Sans", "Noto Sans CJK JP", sans-serif;
    font-size: 32px;
}

.name-input::placeholder {
    color: #757575;
}

.date-input {
    width: 100%;
    height: 84px;
    box-sizing: border-box;
    display: flex;
    align-items: center;
    padding: 0 26px 0 37px;
    border: 2px solid #ddd;
    border-radius: 8px;
    background: #fff;
    font-size: 32px;
    color: #000;
}

.date-sep {
    width: 15px;
    margin: 0 3px;
    text-align: center;
}

.date-sep.first {
    margin: 0 5px 0 15px;
}

.date-input span {
    margin-bottom: 4px;
}

.date-icon {
    margin-left: auto;
}

.add-btn {
    width: 288px;
    height: 96px;
    margin-top: 30px;
    padding: 0 0 3px;
    border: 0;
    border-radius: 8px;
    background: #3778f5;
    font-family: "Liberation Sans", "Noto Sans CJK JP", sans-serif;
    font-size: 32px;
    font-weight: 700;
    color: #fff;
}

.empty {
    margin: 0 0 59px;
    padding: 140px 0 0;
    line-height: 50px;
    font-size: 32px;
    font-style: italic;
    text-align: center;
    color: #666;
}

.widget {
    width: 906px;
    height: 64px;
    box-sizing: border-box;
    margin: auto 47px 88px auto;
    display: flex;
    align-items: center;
    padding: 0 24px 0 32px;
    background: #fff;
    border-radius: 16px;
    box-shadow: 0 2px 6px rgba(0, 0, 0, .12);
    font-family: Inter, sans-serif;
    font-size: 27px;
    font-weight: 600;
    color: #3f4756;
}

.widget-item {
    display: flex;
    align-items: center;
    gap: 18px;
}

.pick {
    margin-left: 69px;
}

.logs {
    margin-left: 48px;
}

.shot {
    margin-left: 46px;
}

.widget-menu {
    margin-left: auto;
}

/* dock */
.dock {
    height: 126px;
    flex: none;
    box-sizing: border-box;
    margin: 6px 86px 0;
    display: flex;
    align-items: flex-start;
    gap: 25.450px;
    padding: 18px 0 0 18px;
    border: 1px solid rgba(200, 210, 235, .45);
    border-radius: 34px;
    background: linear-gradient(90deg, #6f6d80 0, #36436a 220px, #3d4c75 620px, #545a80 920px, #4b5a85 1220px, #5c5c7a 1620px, #3f4a70 1820px, #2a3b68 2060px, #3f5484 2420px, #4f6590 2852px);
}

.dock-item {
    position: relative;
    width: 78px;
    height: 78px;
    flex: none;
}

.dot {
    position: absolute;
    left: 36px;
    top: 95px;
    width: 6px;
    height: 7px;
    border-radius: 50%;
    background: #c5d5f5;
}

.pin {
    margin-top: -9px;
}

.tall {
    margin-top: -2px;
}

.tall .dot {
    top: 97px;
}

.dock-sep {
    width: 1px;
    height: 94px;
    flex: none;
    margin: 0 10px 0 13px;
    background: rgba(215, 225, 245, .55);
}

.trash {
    margin-top: -7px;
    display: flex;
    justify-content: center;
}

.term-text {
    font-family: "Liberation Mono", monospace;
    font-size: 28px;
    font-weight: 700;
}

.cal-month {
    font-family: "Noto Sans CJK JP", sans-serif;
    font-size: 16px;
    font-weight: 500;
}

.cal-day {
    font-family: "Liberation Sans", sans-serif;
    font-size: 44px;
}
```
